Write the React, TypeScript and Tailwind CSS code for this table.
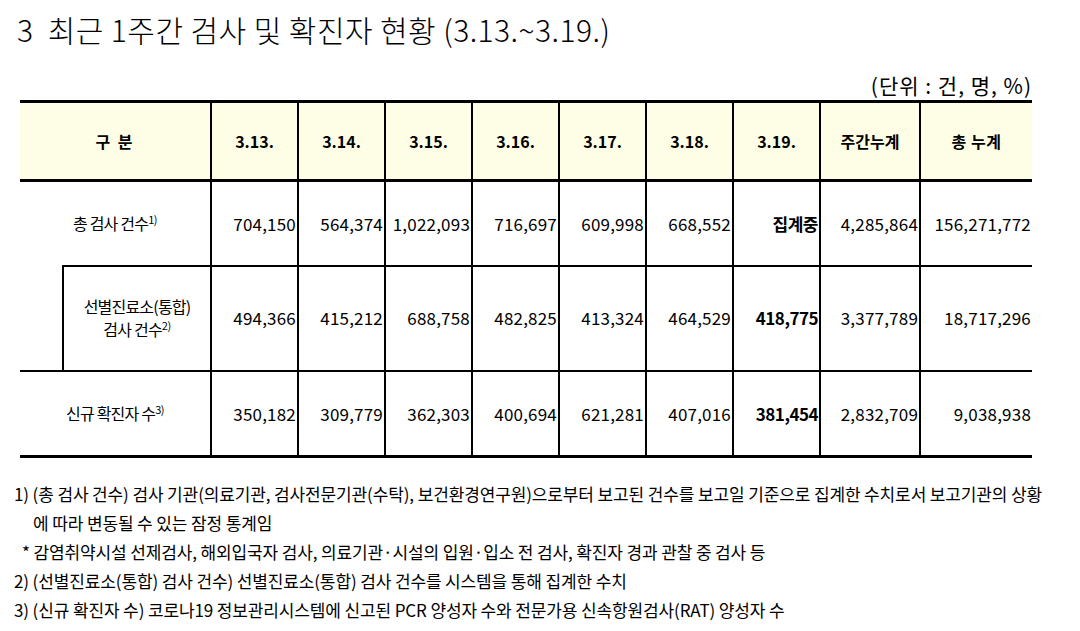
import React from "react";

const dates = ["3.13.", "3.14.", "3.15.", "3.16.", "3.17.", "3.18.", "3.19."];

type Row = { vals: string[]; boldIdx: number };

const r1: Row = {
  vals: ["704,150", "564,374", "1,022,093", "716,697", "609,998", "668,552", "집계중", "4,285,864", "156,271,772"],
  boldIdx: 6,
};
const r2: Row = {
  vals: ["494,366", "415,212", "688,758", "482,825", "413,324", "464,529", "418,775", "3,377,789", "18,717,296"],
  boldIdx: 6,
};
const r3: Row = {
  vals: ["350,182", "309,779", "362,303", "400,694", "621,281", "407,016", "381,454", "2,832,709", "9,038,938"],
  boldIdx: 6,
};

function DataCells({ row, top, bottom }: { row: Row; top: string; bottom: string }) {
  return (
    <>
      {row.vals.map((v, i) => (
        <td
          key={i}
          className={`border-l-2 border-black ${top} ${bottom} text-right pr-[1px] align-middle text-[17px] ${
            i === row.boldIdx ? "font-bold tracking-[-0.5px]" : "font-normal tracking-[0.2px]"
          }`}
        >
          {v}
        </td>
      ))}
    </>
  );
}

function Sup({ children }: { children: React.ReactNode }) {
  return <span className="text-[11px] leading-none relative -top-[6px] tracking-[-0.5px]">{children}</span>;
}

export default function App() {
  return (
    <div className="w-[1080px] h-[631px] bg-white text-black font-['Noto_Sans_CJK_KR','Noto_Sans',sans-serif] overflow-hidden">
      <div className="pl-[17px] pt-[9px] text-[30px] leading-[40px] tracking-[0.45px] font-light">
        3&nbsp;&nbsp;최근 1주간 검사 및 확진자 현황 (3.13.~3.19.)
      </div>
      <div className="w-[1032px] text-right text-[21px] leading-[26px] mt-[23px] tracking-[1px] whitespace-pre">
        (단위 : 건, 명, %)
      </div>
      <table className="table-fixed border-collapse w-[1012px] ml-[20px] mt-[2px]">
        <colgroup>
          <col className="w-[43px]" />
          <col className="w-[148px]" />
          <col className="w-[87px]" />
          <col className="w-[87px]" />
          <col className="w-[87px]" />
          <col className="w-[87px]" />
          <col className="w-[87px]" />
          <col className="w-[87px]" />
          <col className="w-[87px]" />
          <col className="w-[100px]" />
          <col className="w-[112px]" />
        </colgroup>
        <tbody>
          <tr className="h-[79px] bg-[#fefee6]">
            <th
              colSpan={2}
              className="border-t-[3px] border-b-[3px] border-black text-[16px] font-bold tracking-[2px]"
            >
              구 분
            </th>
            {dates.map((d) => (
              <th
                key={d}
                className="border-t-[3px] border-b-[3px] border-l-2 border-black text-[16px] font-bold"
              >
                {d}
              </th>
            ))}
            <th className="border-t-[3px] border-b-[3px] border-l-2 border-black text-[16px] font-bold">
              주간누계
            </th>
            <th className="border-t-[3px] border-b-[3px] border-l-2 border-black text-[16px] font-bold tracking-[0.5px]">
              총 누계
            </th>
          </tr>
          <tr className="h-[85px]">
            <td colSpan={2} className="text-center text-[16px] tracking-[-0.8px] border-b-0">
              총 검사 건수<Sup>1)</Sup>
            </td>
            <DataCells row={r1} top="" bottom="border-b-2" />
          </tr>
          <tr className="h-[105px]">
            <td className="border-t-0"></td>
            <td className="border-t-2 border-l-2 border-black text-center text-[16px] leading-[23px] tracking-[-0.8px]">
              선별진료소(통합)
              <br />
              검사 건수<Sup>2)</Sup>
            </td>
            <DataCells row={r2} top="border-t-2" bottom="border-b-2" />
          </tr>
          <tr className="h-[86px]">
            <td colSpan={2} className="border-t-2 border-b-[3px] border-black text-center text-[16px] tracking-[-0.8px]">
              신규 확진자 수<Sup>3)</Sup>
            </td>
            <DataCells row={r3} top="border-t-2" bottom="border-b-[3px]" />
          </tr>
        </tbody>
      </table>
      <div className="mt-[21px] pl-[14px] text-[17px] leading-[29px] tracking-[-0.13px] whitespace-nowrap">
        <div>1) (총 검사 건수) 검사 기관(의료기관, 검사전문기관(수탁), 보건환경연구원)으로부터 보고된 건수를 보고일 기준으로 집계한 수치로서 보고기관의 상황</div>
        <div className="pl-[19px]">에 따라 변동될 수 있는 잠정 통계임</div>
        <div className="pl-[8px]">* 감염취약시설 선제검사, 해외입국자 검사, 의료기관·시설의 입원·입소 전 검사, 확진자 경과 관찰 중 검사 등</div>
        <div>2) (선별진료소(통합) 검사 건수) 선별진료소(통합) 검사 건수를 시스템을 통해 집계한 수치</div>
        <div>3) (신규 확진자 수) 코로나19 정보관리시스템에 신고된 PCR 양성자 수와 전문가용 신속항원검사(RAT) 양성자 수</div>
      </div>
    </div>
  );
}
